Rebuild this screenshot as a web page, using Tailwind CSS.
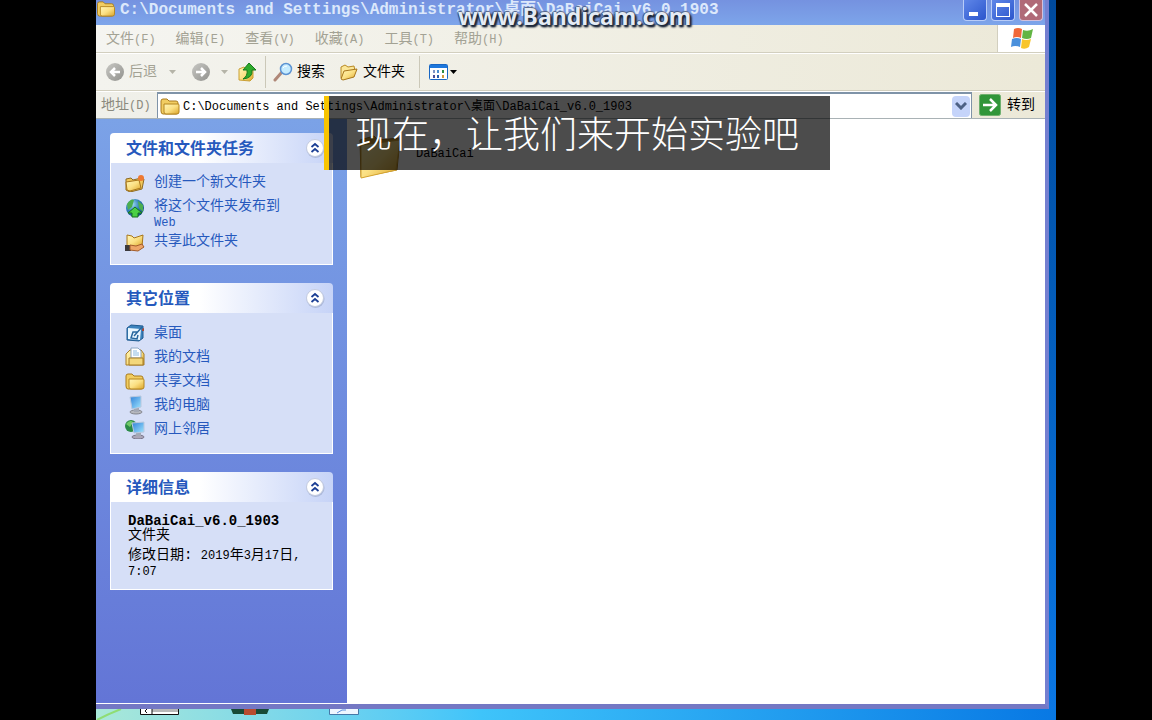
<!DOCTYPE html>
<html lang="zh-CN">
<head>
<meta charset="utf-8">
<title>DaBaiCai_v6.0_1903</title>
<script src="https://cdn.jsdelivr.net/npm/@tailwindcss/browser@4"></script>
</head>
<body class="h-screen overflow-hidden bg-black font-['Liberation_Mono','Noto_Sans_CJK_SC',monospace] text-sm text-black">

<svg class="absolute size-0" aria-hidden="true">
  <defs>
    <linearGradient id="gold" x1="0" y1="0" x2="1" y2="1"><stop offset="0" stop-color="#fff6b8"/><stop offset=".5" stop-color="#fbe083"/><stop offset="1" stop-color="#dba428"/></linearGradient>
    <linearGradient id="grey" x1="0" y1="0" x2="1" y2="1"><stop offset="0" stop-color="#c8c8c4"/><stop offset="1" stop-color="#91918d"/></linearGradient>
    <linearGradient id="screen" x1="0" y1="0" x2="1" y2="1"><stop offset="0" stop-color="#2f7fd8"/><stop offset="1" stop-color="#9fe6ff"/></linearGradient>
    <radialGradient id="globe" cx=".35" cy=".3" r=".8"><stop offset="0" stop-color="#9fdcf5"/><stop offset=".5" stop-color="#2f7fb8"/><stop offset="1" stop-color="#0d4a6e"/></radialGradient>
    <symbol id="folder" viewBox="0 0 20 18"><path d="M1 14V4q0-2 2-2h4l2 2h7q2 0 2 2v9q0 2-2 2H3q-2 0-2-3z" fill="#f1cd62" stroke="#a97b1c"/><path d="M4 7h14q1 0 1 1v7q0 2-2 2H6q-2 0-2-2z" fill="url(#gold)" stroke="#b58621"/></symbol>
    <symbol id="open-folder" viewBox="0 0 20 18"><path d="M2 15V4l4-2 3 2 6-1 1 5z" fill="#fbe79a" stroke="#b98a24"/><path d="M2 16 5 8l13-2-3 8-11 3z" fill="url(#gold)" stroke="#a8761b" stroke-linejoin="round"/></symbol>
    <symbol id="new-folder" viewBox="0 0 20 18"><path d="M1 16V5l5-1 2 2 8-2 3 1-2 10-12 3z" fill="#efc75c" stroke="#8d6a22" stroke-linejoin="round"/><path d="m1 8 13-2 2 8-11 3-3-1z" fill="url(#gold)" stroke="#a8761b" stroke-linejoin="round"/><circle cx="16" cy="4" r="3" fill="#ee7932"/></symbol>
    <symbol id="chevrons" viewBox="0 0 20 20"><circle cx="10.500" cy="11" r="9" fill="#8d9bbd" opacity=".5"/><circle cx="10" cy="10" r="8.500" fill="#fff" stroke="#c3cbe0"/><path d="m6.500 9 3.500-3 3.500 3m-7 5 3.500-3 3.500 3" fill="none" stroke="#1c3f94" stroke-width="1.800"/></symbol>
  </defs>
</svg>

<main class="relative mx-24 flex h-full flex-col bg-linear-to-b from-[#00499b] to-[#0b78e6]">

  <section class="mr-[7px] flex min-h-0 flex-1 flex-col border-r-4 border-b-[5px] border-r-[#747fd0] border-b-[#7478c4]">
    <header class="flex h-[25px] shrink-0 items-start bg-linear-to-b from-[#7592e0] to-[#7da5ea] pr-[2px]">
      <svg class="h-[17px] w-5 shrink-0" viewBox="0 0 20 18"><use href="#folder"/></svg>
      <h1 class="ml-1 flex-1 truncate text-base leading-5 font-bold text-[#dce8fb]">C:\Documents and Settings\Administrator\桌面\DaBaiCai_v6.0_1903</h1>
      <div class="flex gap-1">
        <button aria-label="最小化" class="flex h-[21px] w-6 items-end rounded-b border border-t-0 border-[#b8ccf8] bg-linear-to-br from-[#5f86e8] to-[#2c55cc] pb-1 pl-[5px]"><span class="h-1 w-[9px] bg-white"></span></button>
        <button aria-label="最大化" class="flex h-[21px] w-6 items-center justify-center rounded-b border border-t-0 border-[#b8ccf8] bg-linear-to-br from-[#5f86e8] to-[#2c55cc]"><span class="h-[14px] w-[14px] border border-t-4 border-white"></span></button>
        <button aria-label="关闭" class="flex h-[21px] w-6 items-center justify-center rounded-b border border-t-0 border-[#d3c0dc] bg-[#b06a78]"><svg class="size-4" viewBox="0 0 16 16"><path d="m2 2 12 12M14 2 2 14" stroke="#fff" stroke-width="2.500"/></svg></button>
      </div>
    </header>

    <div class="flex h-7 shrink-0 border-b border-[#d2cfbf] bg-linear-to-r from-[#f5f5f1] to-[#ece9d8]">
      <nav aria-label="菜单" class="flex flex-1 items-center gap-5 pl-[10px] text-[#a3a294]">
        <button>文件<span class="text-xs">(F)</span></button>
        <button>编辑<span class="text-xs">(E)</span></button>
        <button>查看<span class="text-xs">(V)</span></button>
        <button>收藏<span class="text-xs">(A)</span></button>
        <button>工具<span class="text-xs">(T)</span></button>
        <button>帮助<span class="text-xs">(H)</span></button>
      </nav>
      <div class="flex w-12 items-center justify-center border-l border-[#d2cfbf] bg-white">
        <svg class="h-[23px] w-[25px]" viewBox="0 0 25 23"><path d="M5 2q4-2 8 0l-1 9q-4-2-8 0z" fill="#f0683a"/><path d="M14 3q5 2 10-1l-2 9q-4 2-9 0z" fill="#62b544"/><path d="M3 12q5-2 9 0l-1 8q-5-2-9 0z" fill="#4a90dc"/><path d="M13 12q4 2 9 0l-2 8q-4 3-8 1z" fill="#f8c52c"/></svg>
      </div>
    </div>

    <div class="flex h-[38px] shrink-0 items-center border-t border-b border-t-white border-b-[#d2cfbf] bg-linear-to-r from-[#f3f3ee] to-[#ece9d8] pl-[9px]">
      <button disabled class="flex items-center gap-1 text-[#a3a294]">
        <svg class="size-5" viewBox="0 0 20 20"><circle cx="10" cy="10" r="9" fill="url(#grey)"/><path d="M15 10H6m4-4-4 4 4 4" fill="none" stroke="#fff" stroke-width="2.500"/></svg>后退</button>
      <svg class="ml-3 h-1 w-[7px]" viewBox="0 0 7 4"><path d="M0 0h7L3.500 4z" fill="#b5b4a8"/></svg>
      <button disabled aria-label="前进" class="ml-[15px]"><svg class="size-5" viewBox="0 0 20 20"><circle cx="10" cy="10" r="9" fill="url(#grey)"/><path d="M5 10h9m-4-4 4 4-4 4" fill="none" stroke="#fff" stroke-width="2.500"/></svg></button>
      <svg class="ml-[10px] h-1 w-[7px]" viewBox="0 0 7 4"><path d="M0 0h7L3.500 4z" fill="#b5b4a8"/></svg>
      <button aria-label="向上" class="ml-[10px]"><svg class="h-5 w-[19px]" viewBox="0 0 19 20"><path d="M1 18V7l5-2 2 2h7v9l-3 3z" fill="url(#gold)" stroke="#caa035"/><path d="M5 17q5-3 4-9H5l6-7 7 7h-4q1 8-9 9z" fill="#2eab2b" stroke="#167a1c"/></svg></button>
      <span class="ml-2 h-8 w-px bg-[#cbc8b8]"></span>
      <button class="ml-[7px] flex items-center gap-1"><svg class="size-5" viewBox="0 0 20 20"><path d="m2 18 7-8" stroke="#b08878" stroke-width="3" stroke-linecap="round"/><circle cx="13" cy="7" r="5.500" fill="#c6ecff" stroke="#5c93d2" stroke-width="1.500"/><path d="M10 6q1-2 4-2" stroke="#fff" fill="none"/></svg>搜索</button>
      <button class="ml-[14px] flex items-center gap-1"><svg class="h-[18px] w-5"><use href="#open-folder"/></svg>文件夹</button>
      <span class="ml-[14px] h-8 w-px bg-[#cbc8b8]"></span>
      <button aria-label="查看方式" class="ml-[9px] flex items-center gap-[2px]"><svg class="h-4 w-[19px]" viewBox="0 0 19 16"><rect x=".5" y=".5" width="18" height="15" rx="1" fill="#fff" stroke="#1766c4"/><path d="M1 1h17v3H1z" fill="#1e78dc"/><path d="M4 6h2v3H4z" fill="#7d94c4"/><path d="M8 6h2v3H8z" fill="#4a8fd0"/><path d="M13 6h2v3h-2z" fill="#2d8c44"/><path d="M4 11h2v3H4z" fill="#4b4f96"/><path d="M8 11h2v3H8z" fill="#2a5ca8"/><path d="M13 11h2v3h-2z" fill="#d19a3c"/></svg><svg class="h-1 w-[7px]" viewBox="0 0 7 4"><path d="M0 0h7L3.500 4z"/></svg></button>
    </div>

    <form class="flex h-7 shrink-0 items-center border-t border-white border-b border-b-[#a9b2b5] bg-linear-to-r from-[#f0f0ea] to-[#ece9d8]">
      <label for="address" class="w-[61px] shrink-0 pl-[5px] whitespace-nowrap text-[#8b8a7e]">地址<span class="text-xs">(D)</span></label>
      <div class="flex h-full min-w-0 flex-1 items-center border-x border-t-2 border-[#7f93a8] bg-white pr-px pl-[2px]">
        <svg class="h-[18px] w-5 shrink-0"><use href="#folder"/></svg>
        <input id="address" class="ml-[3px] min-w-0 flex-1 pt-[2px] text-xs outline-none" value="C:\Documents and Settings\Administrator\桌面\DaBaiCai_v6.0_1903">
        <button type="button" aria-label="展开" class="flex h-[21px] w-[18px] items-center justify-center rounded-sm bg-[#c5d4fa]"><svg class="h-2 w-3" viewBox="0 0 12 8"><path d="m1 1 5 5 5-5" fill="none" stroke="#4d6185" stroke-width="3"/></svg></button>
      </div>
      <button type="button" class="flex w-[73px] shrink-0 items-center gap-[6px] pl-[7px]"><svg class="size-[22px]" viewBox="0 0 22 22"><rect x=".5" y=".5" width="21" height="21" rx="2" fill="#31963a" stroke="#6fb06f"/><path d="M4 11h13m-6-6 6 6-6 6" fill="none" stroke="#fff" stroke-width="2.500"/></svg>转到</button>
    </form>

    <div class="flex min-h-0 flex-1">
      <aside class="flex w-[251px] shrink-0 flex-col gap-[18px] border-b border-white bg-linear-to-b from-[#7ba2e7] to-[#6375d6] px-[14px] pt-[14px] text-[#2659bd]">
        <section>
          <div class="flex h-[30px] items-center rounded-t bg-linear-to-r from-white from-40% to-[#c6d3f7] pr-2 pl-4">
            <h2 class="flex-1 pt-[3px] text-base font-bold">文件和文件夹任务</h2>
            <button aria-label="折叠文件和文件夹任务"><svg class="block size-5"><use href="#chevrons"/></svg></button>
          </div>
          <ul class="h-[102px] border border-t-0 border-white bg-[#d6dff7] pt-[9px] pl-[14px] leading-4">
            <li><a href="#" class="flex items-start gap-[9px] pt-[2px] pb-[6px]"><svg class="h-[18px] w-5 shrink-0"><use href="#new-folder"/></svg>创建一个新文件夹</a></li>
            <li><a href="#" class="flex items-start gap-[9px] pb-[2px]"><svg class="h-5 w-5 shrink-0" viewBox="0 0 20 20"><circle cx="10" cy="10" r="9" fill="url(#globe)"/><path d="M2 6q4-6 7-4l-2 7-4 3zM13 3l5 4v7l-4-4z" fill="#4cae4f"/><path d="m10 9 7 6h-4v4H7v-4H3z" fill="#4ad044" stroke="#15701f"/></svg><span>将这个文件夹发布到<br><span class="text-xs">Web</span></span></a></li>
            <li><a href="#" class="flex items-start gap-[9px]"><svg class="h-5 w-5 shrink-0" viewBox="0 0 20 20"><path d="M2 14V2l5 1 2 2 9-3-1 12z" fill="url(#gold)" stroke="#a8761b"/><path d="M0 12h6v6H0z" fill="#3c3a3c"/><path d="m5 12 6 1 6-2 2 3-6 4-8-1z" fill="#eda568" stroke="#a35c2a"/></svg>共享此文件夹</a></li>
          </ul>
        </section>

        <section>
          <div class="flex h-[30px] items-center rounded-t bg-linear-to-r from-white from-40% to-[#c6d3f7] pr-2 pl-4">
            <h2 class="flex-1 pt-[3px] text-base font-bold">其它位置</h2>
            <button aria-label="折叠其它位置"><svg class="block size-5"><use href="#chevrons"/></svg></button>
          </div>
          <ul class="h-[141px] border border-t-0 border-white bg-[#d6dff7] pt-2 pl-[14px] leading-6">
            <li><a href="#" class="flex items-center gap-[9px]"><svg class="h-5 w-5" viewBox="0 0 20 20"><path d="M2 5 6 2l12 1v12l-4 3-12-1z" fill="#3c83bd" stroke="#1f5a90"/><path d="m3 5 13 1-1 11-12-1z" fill="#e9f7ff"/><path d="M13 9H8l-2 6 6 1 1-4m-4 1 8-9" fill="none" stroke="#27689e" stroke-width="1.500"/><path d="m17 6 2-1v3h-2z" fill="#a84736"/></svg>桌面</a></li>
            <li><a href="#" class="flex items-center gap-[9px]"><svg class="h-5 w-5" viewBox="0 0 20 20"><path d="M1 18V7l4-4h11l3 4v11z" fill="url(#gold)" stroke="#a67c26"/><path d="M6 11V1h7l3 3v7z" fill="#fff" stroke="#8ca6c4"/><path d="M8 4h4M8 6h6M8 8h6" stroke="#8bbbe2"/><path d="M4 11h14v7H4z" fill="#f3d77b" stroke="#a67c26"/></svg>我的文档</a></li>
            <li><a href="#" class="flex items-center gap-[9px]"><svg class="h-[18px] w-5"><use href="#folder"/></svg>共享文档</a></li>
            <li><a href="#" class="flex items-center gap-[9px]"><svg class="h-5 w-5" viewBox="0 0 20 20"><ellipse cx="11" cy="17" rx="6" ry="2" fill="#b6b8bd" stroke="#83868e"/><path d="M9 13h5v4H9z" fill="#a3a8b4"/><path d="m5 2 11-1v11l-9 2z" fill="url(#screen)" stroke="#b8c8de"/></svg>我的电脑</a></li>
            <li><a href="#" class="flex items-center gap-[9px]"><svg class="h-5 w-5" viewBox="0 0 20 20"><circle cx="6" cy="7" r="6" fill="#2b8b48"/><path d="M1 5q4-5 7-2L5 8z" fill="#70c967"/><ellipse cx="13" cy="18" rx="6" ry="2" fill="#aaa6b8" stroke="#777489"/><path d="M11 13h5v4h-5z" fill="#a3a8b4"/><path d="m7 4 12-1v10l-10 1z" fill="url(#screen)" stroke="#b8c8de"/></svg>网上邻居</a></li>
          </ul>
        </section>

        <section>
          <div class="flex h-[30px] items-center rounded-t bg-linear-to-r from-white from-40% to-[#c6d3f7] pr-2 pl-4">
            <h2 class="flex-1 pt-[3px] text-base font-bold">详细信息</h2>
            <button aria-label="折叠详细信息"><svg class="block size-5"><use href="#chevrons"/></svg></button>
          </div>
          <div class="h-[88px] border border-t-0 border-white bg-[#d6dff7] pt-3 pl-[17px] leading-[14px] text-black">
            <p class="font-bold">DaBaiCai_v6.0_1903</p>
            <p>文件夹</p>
            <p class="mt-[6px]">修改日期: <span class="text-xs">2019</span>年<span class="text-xs">3</span>月<span class="text-xs">17</span>日<span class="text-xs">,</span><br><span class="text-xs">7:07</span></p>
          </div>
        </section>
      </aside>

      <div class="flex-1 bg-white pt-3 pl-3">
        <a href="#" class="flex w-[120px] items-start gap-[15px] text-xs"><svg class="h-12 w-[42px] shrink-0" viewBox="0 0 42 48"><path d="M1 9 15 5l4 4 22-2-3 32L2 46z" fill="#c79a36" stroke="#a67a20"/><path d="m2 14 39-5-4 30L2 47z" fill="url(#gold)" stroke="#d6a530"/></svg><span class="mt-[15px]">DaBaiCai</span></a>
      </div>
    </div>
  </section>

  <div class="flex h-[11px] shrink-0 items-start overflow-hidden bg-linear-to-r from-[#a9e8d8] via-[#3fc4fa] via-40% to-[#0878e4]">
    <svg class="h-[11px] w-[44px]" viewBox="0 0 44 11"><path d="M1 11Q12 5 25 0" fill="none" stroke="#8fdd74" stroke-width="2"/></svg>
    <svg class="h-[6px] w-[39px]" viewBox="0 0 39 6"><path d="M.5-1h38v6.500H.5z" fill="#fff" stroke="#111"/><path d="M12 0h26v3H12z" fill="#b8b8b8"/><path d="M12 0v5M7 0 5 2l2 2" fill="none" stroke="#111"/></svg>
    <svg class="ml-[52px] h-[6px] w-[38px]" viewBox="0 0 38 6"><path d="M0 0h38l-2 5H2z" fill="#174a37"/><path d="M13 0h12v6H13z" fill="#b84a30"/></svg>
    <svg class="ml-[60px] h-[6px] w-[30px]" viewBox="0 0 30 6"><path d="M.5-1h29v6.500H.5z" fill="#eef6ff" stroke="#4678a8"/><path d="m8 4 5-3h4" fill="none" stroke="#5a8fe0"/></svg>
  </div>

  <p class="absolute top-0 left-[362px] font-['Noto_Sans',sans-serif] text-[23px] leading-8 font-bold text-[#e4ebf4] [text-shadow:1px_2px_2px_#1c2638,2px_2px_2px_#1c2638,-1px_0_1px_#37455f,0_-1px_1px_#56658a]">www.Bandicam.com</p>
  <p class="absolute top-24 left-[228px] h-[74px] w-[506px] border-l-[5px] border-[#f8c400] bg-black/70 pl-[26px] font-['Noto_Sans_CJK_SC',sans-serif] text-[37px] leading-[72px] font-light whitespace-nowrap text-white">现在，让我们来开始实验吧</p>
</main>
</body>
</html>
